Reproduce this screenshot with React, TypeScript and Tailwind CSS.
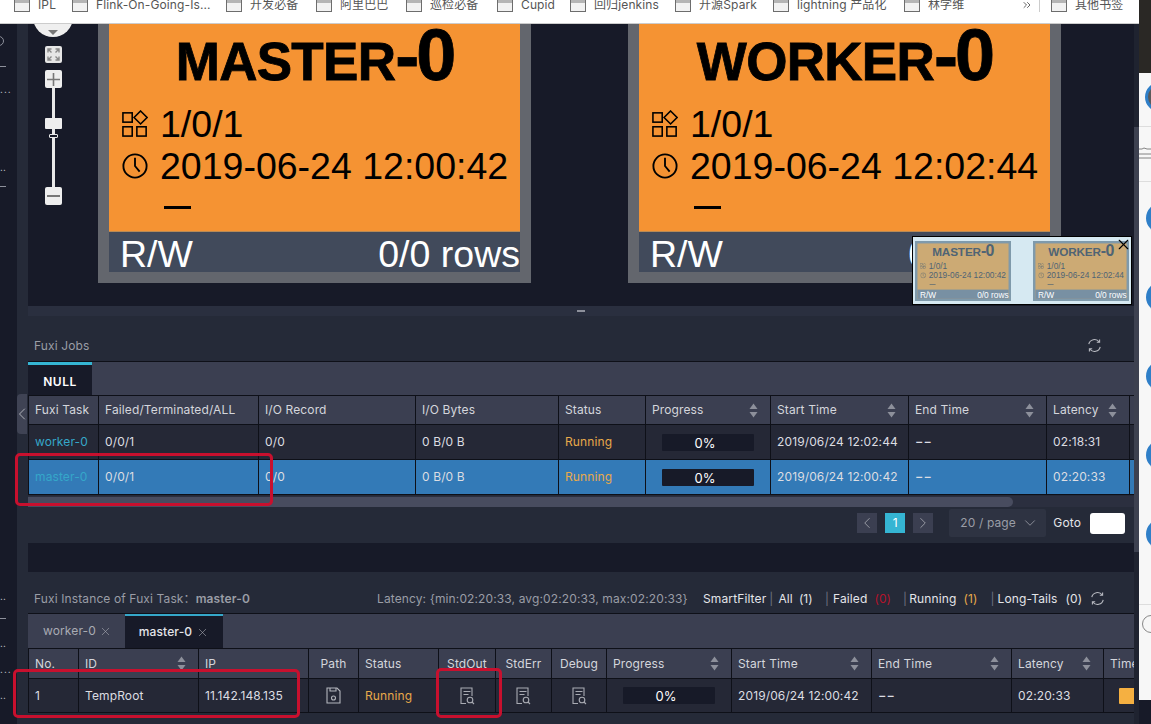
import React from "react";
import { ChevronDown, ChevronLeft, ChevronRight, ChevronsRight, X } from "lucide-react";

const bookmarks = [
  { name: "IPL", width: "w-[18px]" },
  { name: "Flink-On-Going-Is...", width: "w-[114px]" },
  { name: "开发必备", width: "w-[50px]" },
  { name: "阿里巴巴", width: "w-[50px]" },
  { name: "巡检必备", width: "w-[51px]" },
  { name: "Cupid", width: "w-[33px]" },
  { name: "回归jenkins", width: "w-[65px]" },
  { name: "开源Spark", width: "w-[58px]" },
  { name: "lightning 产品化", width: "w-[91px]" },
  { name: "林学维", width: "w-[37px]" },
];

const FolderIcon = () => (
  <svg width="16" height="13" viewBox="0 0 16 13" className="shrink-0">
    <rect x="0.5" y="0.5" width="15" height="12" fill="#f2f2f2" stroke="#6d6d6d" />
    <rect x="1" y="1" width="14" height="3" fill="#b5b5b5" />
  </svg>
);

const Bookmark = ({ name, width }: { name: string; width: string }) => (
  <div className="flex items-center gap-2 shrink-0">
    <FolderIcon />
    <span className={`${width} whitespace-nowrap text-[12px] leading-[12px] text-[#555]`}>{name}</span>
  </div>
);

const RefreshIcon = ({ className = "" }: { className?: string }) => (
  <svg width="15" height="15" viewBox="0 0 15 15" fill="none" stroke="#b9bbc2" strokeWidth="1.1" className={className}>
    <path d="M1.8 6.2A5.8 5.8 0 0 1 12.2 4" />
    <path d="M13.2 8.8A5.8 5.8 0 0 1 2.8 11" />
    <path d="M12.6 1.4v2.9H9.8" />
    <path d="M2.4 13.6v-2.9h2.8" />
  </svg>
);

const SortIcon = () => (
  <svg width="9" height="15" viewBox="0 0 9 15" className="shrink-0">
    <path d="M4.5 0.5L8.5 6H0.5Z" fill="#8d909b" />
    <path d="M4.5 14.5L0.5 9H8.5Z" fill="#8d909b" />
  </svg>
);

const DocSearchIcon = () => (
  <svg width="15" height="18" viewBox="0 0 15 18" fill="none" stroke="#a9abb3" strokeWidth="1.1" className="mx-auto">
    <path d="M6 16.5H1V1h11v8" />
    <path d="M3.5 4.5h7M3.5 7.5h5" />
    <circle cx="10" cy="13" r="2.8" />
    <path d="M12 15l2 2" />
  </svg>
);

const SaveIcon = () => (
  <svg width="15" height="17" viewBox="0 0 15 17" fill="none" stroke="#b4b6bd" strokeWidth="1.1" className="mx-auto">
    <path d="M1 1h10l3 3v12H1Z" />
    <path d="M4 1v3h6V1" />
    <circle cx="7.5" cy="11" r="2" />
  </svg>
);

const TaskIcon = ({ stroke }: { stroke: string }) => (
  <svg viewBox="0 0 28 30" fill="none" stroke={stroke} strokeWidth="1.7" className="ml-[2px] w-[26px] h-[28px] shrink-0">
    <rect x="1" y="3" width="10" height="10" />
    <path d="M20 1l7 7-7 7-7-7Z" />
    <rect x="1" y="18" width="10" height="10" />
    <rect x="16" y="18" width="10" height="10" />
  </svg>
);

const ClockIcon = ({ stroke }: { stroke: string }) => (
  <svg viewBox="0 0 28 30" fill="none" stroke={stroke} strokeWidth="2" className="ml-[2px] w-[26px] h-[28px] shrink-0">
    <circle cx="14" cy="15" r="12.5" />
    <path d="M14 6v9l5 6" />
  </svg>
);

// one node of the graph, the minimap draws the same node scaled down
const GraphNode = ({ name, start, mini = false }: { name: string; start: string; mini?: boolean }) => {
  const ink = mini ? "#4f6474" : "#000000";
  return (
    <div className={`w-[433px] h-[272px] border-[11px] flex flex-col font-['Liberation_Sans',sans-serif] tracking-normal ${mini ? "border-[#7f9aab] bg-[#ccaa74]" : "border-[#63666d] bg-[#f59333]"}`}>
      <div className={`flex-1 flex flex-col ${mini ? "text-[#4f6474]" : "text-black"}`}>
        <div className={`mt-[3px] h-[60px] flex items-baseline justify-center font-bold leading-[60px] ${mini ? "" : "[-webkit-text-stroke:0.8px_black]"}`}>
          <span className="text-[53px] tracking-[-0.7px]">{name}</span>
          <span className="text-[72px] tracking-[-3px]">-0</span>
        </div>
        <div className="mt-[18px] pl-[11px] flex items-center gap-[12px] h-[42px] text-[37.5px] leading-[42px]">
          <TaskIcon stroke={ink} />
          <span>1/0/1</span>
        </div>
        <div className="pl-[11px] flex items-center gap-[12px] h-[42px] text-[37.5px] leading-[42px]">
          <ClockIcon stroke={ink} />
          <span className="whitespace-nowrap">{start}</span>
        </div>
        <div className={`ml-[55px] mt-[19px] w-[27px] h-[3px] ${mini ? "bg-[#4f6474]" : "bg-black"}`} />
      </div>
      <div className={`h-[41px] flex items-center justify-between pl-[11px] pt-[3px] text-[37.5px] leading-[38px] text-white border-t ${mini ? "bg-[#7890a3] border-[#7890a3]" : "bg-[#414a5b] border-[#b98a55]"}`}>
        <span>R/W</span>
        <span>0/0 rows</span>
      </div>
    </div>
  );
};

const MiniNode = ({ name, start }: { name: string; start: string }) => (
  <div className="w-[96px] h-[60px] overflow-hidden shrink-0">
    <div className="origin-top-left scale-[0.2217]">
      <GraphNode name={name} start={start} mini />
    </div>
  </div>
);

const ZoomButton = ({ children }: { children: React.ReactNode }) => (
  <div className="w-[17px] h-[18px] bg-[#eeeeee] rounded-[2px] flex items-center justify-center text-[#8a8a8a]">{children}</div>
);

const ZoomControl = () => (
  <div className="absolute left-[5px] top-[-27px] w-[40px] flex flex-col items-center">
    <div className="w-[40px] h-[40px] rounded-full bg-[#efefef] flex items-end justify-center pb-[2px]">
      <div className="w-0 h-0 border-x-[5px] border-x-transparent border-t-[5px] border-t-[#777]" />
    </div>
    <div className="mt-[9px] w-[17px] h-[17px] bg-[#e6e6e6] rounded-[2px] flex items-center justify-center">
      <svg width="13" height="13" viewBox="0 0 13 13" fill="none" stroke="#888" strokeWidth="1.4">
        <path d="M1 4.5V1h3.5M12 4.5V1H8.5M1 8.5V12h3.5M12 8.5V12H8.5M1.5 1.5l3 3M11.5 1.5l-3 3M1.5 11.5l3-3M11.5 11.5l-3-3" />
      </svg>
    </div>
    <div className="mt-[7px]">
      <ZoomButton>
        <svg width="13" height="13" viewBox="0 0 13 13" stroke="#777" strokeWidth="1.6"><path d="M6.5 0v13M0 6.5h13" /></svg>
      </ZoomButton>
    </div>
    <div className="w-[3px] h-[30px] bg-[#e8e8e8]" />
    <div className="w-[17px] h-[11px] bg-[#eeeeee] rounded-[1px]" />
    <div className="w-[3px] h-[5px] bg-[#e8e8e8]" />
    <div className="w-[9px] h-[4px] border border-[#e8e8e8] rounded-[1px]" />
    <div className="w-[3px] h-[49px] bg-[#e8e8e8]" />
    <ZoomButton>
      <div className="w-[13px] h-[2px] bg-[#777]" />
    </ZoomButton>
  </div>
);

const GraphCanvas = () => (
  <div className="relative h-[282px] bg-[#171a28] overflow-hidden shrink-0">
    <ZoomControl />
    <div className="absolute left-[70px] top-[-13px]">
      <GraphNode name="MASTER" start="2019-06-24 12:00:42" />
    </div>
    <div className="absolute left-[600px] top-[-13px]">
      <GraphNode name="WORKER" start="2019-06-24 12:02:44" />
    </div>
    <div className="absolute left-[884px] top-[212px] w-[220px] h-[69px] bg-[#d6e9f2] border border-black flex items-center justify-between px-[2px]">
      <MiniNode name="MASTER" start="2019-06-24 12:00:42" />
      <MiniNode name="WORKER" start="2019-06-24 12:02:44" />
      <X className="absolute right-[-1px] top-[-1px] w-[17px] h-[17px] text-black" strokeWidth={1.6} />
    </div>
  </div>
);

const Th = ({ label, sort = false, center = false }: { label: string; sort?: boolean; center?: boolean }) => (
  <th className="border border-[#0e1018] px-[6px] font-normal text-left overflow-hidden">
    <div className={`flex items-center whitespace-nowrap ${sort ? "justify-between pr-[6px]" : ""} ${center ? "justify-center" : ""}`}>
      <span>{label}</span>
      {sort && <SortIcon />}
    </div>
  </th>
);

const Td = ({ children, className = "" }: { children?: React.ReactNode; className?: string }) => (
  <td className={`border border-[#0e1018] px-[6px] whitespace-nowrap overflow-hidden ${className}`}>{children}</td>
);

const EmptyTime = () => <span className="inline-block origin-left scale-x-150 font-semibold">--</span>;

const ProgressBar = () => (
  <div className="mx-auto w-[92px] h-[17px] pr-[6px] bg-[#171a28] text-center text-white text-[13px] leading-[19px] rounded-[1px]">0%</div>
);

const jobColumns = ["w-[70px]", "w-[160px]", "w-[157px]", "w-[143px]", "w-[87px]", "w-[125px]", "w-[138px]", "w-[138px]", "w-[83px]", "w-[30px]"];
const jobRows = [
  { task: "worker-0", start: "2019/06/24 12:02:44", latency: "02:18:31", selected: false },
  { task: "master-0", start: "2019/06/24 12:00:42", latency: "02:20:33", selected: true },
];

const JobsPanel = () => (
  <section className="h-[227px] bg-[#252a38] shrink-0 flex flex-col">
    <div className="h-[46px] border-b border-[#0e1018] flex items-center justify-between pl-[6px] pr-[32px] pt-[14px]">
      <span className="text-[#9a9da6]">Fuxi Jobs</span>
      <RefreshIcon />
    </div>
    <div className="h-[33px] bg-[#3b3f51] flex">
      <div className="w-[64px] pt-[3px] bg-[#171a28] border-t-[3px] border-[#35b5d3] flex items-center justify-center font-semibold tracking-[0.5px] text-white">NULL</div>
    </div>
    <div className="overflow-hidden">
      <table className="table-fixed border-collapse w-[1131px]">
        <colgroup>
          {jobColumns.map((c, i) => <col key={i} className={c} />)}
        </colgroup>
        <thead>
          <tr className="h-[29px] bg-[#3b3f51] text-[#d4d6dc]">
            <Th label="Fuxi Task" />
            <Th label="Failed/Terminated/ALL" />
            <Th label="I/O Record" />
            <Th label="I/O Bytes" />
            <Th label="Status" />
            <Th label="Progress" sort />
            <Th label="Start Time" sort />
            <Th label="End Time" sort />
            <Th label="Latency" sort />
            <Th label="" />
          </tr>
        </thead>
        <tbody>
          {jobRows.map((row) => (
            <tr key={row.task} className={`h-[35px] text-[#dcdde2] ${row.selected ? "bg-[#337ab7]" : "bg-[#252836]"}`}>
              <Td className="text-[#35a7c9]">{row.task}</Td>
              <Td>0/0/1</Td>
              <Td>0/0</Td>
              <Td>0 B/0 B</Td>
              <Td className="text-[#e8a94a]">Running</Td>
              <Td><ProgressBar /></Td>
              <Td>{row.start}</Td>
              <Td><EmptyTime /></Td>
              <Td>{row.latency}</Td>
              <Td />
            </tr>
          ))}
        </tbody>
      </table>
    </div>
    <div className="mt-[1px] h-[11px] bg-[#2b2f3f]">
      <div className="w-[985px] h-[10px] mt-[1px] rounded-r-[5px] bg-[#484c5f]" />
    </div>
    <div className="flex-1 flex items-center justify-end pr-[9px] pb-[4px]">
      <div className="w-[20px] h-[20px] bg-[#3b3f51] flex items-center justify-center">
        <ChevronLeft className="w-[18px] h-[18px] text-[#a9abb3]" strokeWidth={1.1} />
      </div>
      <div className="ml-[8px] w-[20px] h-[20px] bg-[#35b5d3] text-white text-center leading-[20px]">1</div>
      <div className="ml-[8px] w-[20px] h-[20px] bg-[#3b3f51] flex items-center justify-center">
        <ChevronRight className="w-[18px] h-[18px] text-[#a9abb3]" strokeWidth={1.1} />
      </div>
      <div className="ml-[16px] w-[97px] h-[28px] bg-[#2e3342] rounded-[2px] flex items-center justify-between pl-[11px] pr-[7px] text-[#9a9da6]">
        <span>20 / page</span>
        <ChevronDown className="w-[18px] h-[18px]" strokeWidth={1.1} />
      </div>
      <span className="ml-[7px] text-[#e4e5e9]">Goto</span>
      <div className="ml-[9px] w-[35px] h-[21px] bg-white rounded-[3px]" />
    </div>
  </section>
);

const instanceColumns = ["w-[50px]", "w-[120px]", "w-[110px]", "w-[50px]", "w-[80px]", "w-[57px]", "w-[56px]", "w-[55px]", "w-[125px]", "w-[140px]", "w-[140px]", "w-[92px]", "w-[60px]"];

const InstancePanel = () => (
  <section className="flex-1 bg-[#252a38] flex flex-col min-h-0">
    <div className="h-[42px] shrink-0 border-b border-[#0e1018] flex items-center pl-[6px] pt-[12px] whitespace-nowrap">
      <span className="w-[343px] text-[#9a9da6]">Fuxi Instance of Fuxi Task：<span className="font-semibold">master-0</span></span>
      <span className="w-[326px] text-[#9a9da6]">Latency: {"{"}min:02:20:33, avg:02:20:33, max:02:20:33{"}"}</span>
      <span className="text-[#e4e5e9]">SmartFilter</span>
      <span className="ml-[3px] text-[#6d7080]">|</span>
      <span className="ml-[5px] text-[#e4e5e9]">All</span>
      <span className="ml-[6px] text-[#e4e5e9]">(1)</span>
      <span className="ml-[12px] text-[#6d7080]">|</span>
      <span className="ml-[4px] text-[#e4e5e9]">Failed</span>
      <span className="ml-[7px] text-[#b5132b]">(0)</span>
      <span className="ml-[12px] text-[#6d7080]">|</span>
      <span className="ml-[2px] text-[#e4e5e9]">Running</span>
      <span className="ml-[7px] text-[#e8a94a]">(1)</span>
      <span className="ml-[13px] text-[#6d7080]">|</span>
      <span className="ml-[3px] text-[#e4e5e9]">Long-Tails</span>
      <span className="ml-[8px] text-[#e4e5e9]">(0)</span>
      <RefreshIcon className="ml-[8px]" />
    </div>
    <div className="h-[34px] shrink-0 bg-[#3b3f51] flex items-center">
      <div className="ml-[15px] w-[82px] flex items-center gap-[3px] text-[#a9abb3]">
        <span>worker-0</span>
        <X className="w-[13px] h-[13px]" strokeWidth={1.1} />
      </div>
      <div className="h-full w-[98px] bg-[#171a28] border-t-[2px] border-[#35a7c9] flex items-center justify-center gap-[4px] text-[#e4e5e9] font-medium">
        <span>master-0</span>
        <X className="w-[13px] h-[13px] text-[#a9abb3]" strokeWidth={1.1} />
      </div>
    </div>
    <div className="overflow-hidden shrink-0">
      <table className="table-fixed border-collapse w-[1135px]">
        <colgroup>
          {instanceColumns.map((c, i) => <col key={i} className={c} />)}
        </colgroup>
        <thead>
          <tr className="h-[30px] bg-[#3b3f51] text-[#d4d6dc]">
            <Th label="No." />
            <Th label="ID" sort />
            <Th label="IP" />
            <Th label="Path" center />
            <Th label="Status" />
            <Th label="StdOut" center />
            <Th label="StdErr" center />
            <Th label="Debug" center />
            <Th label="Progress" sort />
            <Th label="Start Time" sort />
            <Th label="End Time" sort />
            <Th label="Latency" sort />
            <Th label="Time" />
          </tr>
        </thead>
        <tbody>
          <tr className="h-[34px] bg-[#252836] text-[#dcdde2]">
            <Td>1</Td>
            <Td>TempRoot</Td>
            <Td>11.142.148.135</Td>
            <Td><SaveIcon /></Td>
            <Td className="text-[#e8a94a]">Running</Td>
            <Td><DocSearchIcon /></Td>
            <Td><DocSearchIcon /></Td>
            <Td><DocSearchIcon /></Td>
            <Td><ProgressBar /></Td>
            <Td>2019/06/24 12:00:42</Td>
            <Td><EmptyTime /></Td>
            <Td>02:20:33</Td>
            <Td>
              <div className="ml-[9px] w-[40px] h-[16px] bg-[#f5b041] rounded-[1px]" />
            </Td>
          </tr>
        </tbody>
      </table>
    </div>
  </section>
);

const LeftRail = () => (
  <div className="w-[28px] shrink-0 flex relative">
    <div className="w-[17px] bg-[#171a28] flex flex-col text-[#c9cbd1] text-[10px] leading-[8px] overflow-hidden">
      <div className="mt-[12px] -ml-[6px] w-[10px] h-[10px] rounded-full border border-[#8d909b]" />
      <div className="mt-[20px] w-[6px] h-px bg-[#8d909b]" />
      <div className="mt-[18px] tracking-[1px]">...</div>
      <div className="mt-[70px]">..</div>
      <div className="mt-[15px] w-[6px] h-px bg-[#8d909b]" />
      <div className="mt-[405px]">..</div>
      <div className="mt-[18px] w-[6px] h-px bg-[#8d909b]" />
      <div className="mt-[20px]">..</div>
      <div className="mt-[18px] tracking-[1px]">...</div>
      <div className="mt-[18px]">..</div>
    </div>
    <div className="w-[11px] bg-[#252a38]" />
    <div className="absolute left-[17px] top-[370px] w-[10px] h-[40px] bg-[#3f4354] rounded-l-[4px] flex items-center justify-center">
      <ChevronLeft className="w-[20px] h-[20px] shrink-0 text-[#b9bbc2]" strokeWidth={1.1} />
    </div>
  </div>
);

const RightPeek = () => (
  <div className="w-[12px] shrink-0 h-full bg-[#f7f7f7] flex flex-col overflow-hidden -mt-[24px] relative">
    <div className="h-[73px] bg-[#2a2825] shrink-0" />
    <div className="h-[54px] shrink-0 border-b border-[#dddddd] pl-[6px] pt-[9px]">
      <div className="w-[30px] h-[30px] rounded-full border-[3px] border-[#2f7fc8] bg-[#5a5a5a]" />
    </div>
    <div className="h-[55px] shrink-0 border-b border-[#dddddd] pt-[18px]">
      <svg width="12" height="16" viewBox="0 0 12 16" fill="none" stroke="#666" strokeWidth="0.8"><path d="M0 4h3l2-1 3 1h4M0 9h12M0 13h12" /></svg>
    </div>
    <div className="flex flex-col gap-[49px] pl-[7px] pt-[21px] h-[423px] shrink-0 border-b border-[#dddddd]">
      {[1, 2, 3, 4, 5].map((n) => (
        <div key={n} className="w-[30px] h-[30px] rounded-full bg-[#2f7fc8] shrink-0" />
      ))}
    </div>
    <div className="pl-[3px] pt-[10px]">
      <div className="w-[18px] h-[18px] rounded-full border border-[#888]" />
    </div>
  </div>
);

const Annotation = ({ className }: { className: string }) => (
  <div className={`absolute border-[3px] border-[#c8102e] rounded-[5px] pointer-events-none ${className}`} />
);

export default function App() {
  return (
    <div className="relative w-[1151px] h-[724px] overflow-hidden bg-[#171a28] flex flex-col text-[12px] tracking-[0.12px] font-['Inter','Noto_Sans_CJK_SC',sans-serif]">
      <div className="h-[24px] w-[1139px] shrink-0 z-10 bg-white border-b border-[#cccccc] flex items-start pl-[14px] overflow-hidden">
        <div className="flex items-center gap-[16px] -mt-[2px]">
          {bookmarks.map((b) => <Bookmark key={b.name} name={b.name} width={b.width} />)}
          <ChevronsRight className="ml-[40px] w-[12px] h-[12px] text-[#666]" />
          <div className="w-px h-[14px] bg-[#cccccc] -ml-[10px]" />
          <div className="-ml-[5px]"><Bookmark name="其他书签" width="w-[48px]" /></div>
        </div>
      </div>
      <div className="flex-1 flex min-h-0">
        <LeftRail />
        <div className="w-[1106px] shrink-0 flex flex-col">
          <GraphCanvas />
          <div className="h-[10px] shrink-0 bg-[#2a2f3f] flex items-center justify-center">
            <div className="w-[8px] h-[2px] bg-[#8d909b]" />
          </div>
          <JobsPanel />
          <div className="h-[29px] shrink-0 bg-[#171a28]" />
          <InstancePanel />
        </div>
        <div className="w-[5px] shrink-0 bg-[#1f2330] pt-[103px]">
          <div className="h-[425px] bg-[#3d4150]" />
        </div>
        <RightPeek />
      </div>
      <Annotation className="left-[15px] top-[453px] w-[258px] h-[53px]" />
      <Annotation className="left-[13px] top-[669px] w-[287px] h-[49px]" />
      <Annotation className="left-[436px] top-[668px] w-[66px] h-[50px]" />
    </div>
  );
}
